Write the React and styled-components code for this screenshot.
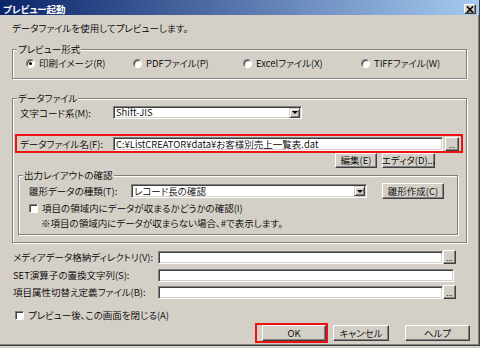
import React from "react";
import styled, { createGlobalStyle } from "styled-components";

const Global = createGlobalStyle`
  html, body { margin: 0; padding: 0; background: #d4d0c8; }
  * { box-sizing: border-box; }
`;

const FONT = `"Noto Sans CJK JP", "Noto Sans", sans-serif`;

const Window = styled.div`
  width: 480px;
  height: 346px;
  background: #d4d0c8;
  font-family: ${FONT};
  font-size: 9.5px;
  font-weight: 350;
  font-feature-settings: "palt";
  color: #000;
  display: flex;
  flex-direction: column;
  border-right: 1px solid #404040;
  border-bottom: 1px solid #404040;
  box-shadow: inset -1px -1px #808080;
  overflow: hidden;
`;

const TitleBar = styled.div`
  height: 15px;
  flex: none;
  display: flex;
  align-items: center;
  justify-content: space-between;
  padding: 2px 3px 0 3px;
  background: linear-gradient(to right, #0a246a, #a6caf0);
  color: #fff;
  font-weight: bold;
  font-size: 9.5px;
  line-height: 12px;
`;

const CloseBtn = styled.div`
  width: 12px;
  height: 10px;
  margin-top: 1px;
  background: #d4d0c8;
  border: 1px solid;
  border-color: #fff #404040 #404040 #fff;
  box-shadow: inset -1px -1px #808080;
  display: flex;
  align-items: center;
  justify-content: center;
`;

const Body = styled.div`
  display: flex;
  flex-direction: column;
  padding: 7px 12px 0 12px;
`;

const Text = styled.div`
  line-height: 12px;
  white-space: nowrap;
  padding-left: ${(p) => p.$pl || 0}px;
  margin-top: ${(p) => p.$mt || 0}px;
`;

const Group = styled.fieldset`
  margin: ${(p) => p.$mt || 0}px ${(p) => p.$mr || 0}px 0 ${(p) => p.$ml || 0}px;
  padding: 0 0 ${(p) => p.$pb || 0}px 0;
  min-inline-size: 0;
  border: 1px solid #808080;
  box-shadow: inset 1px 1px #fff, 1px 1px #fff;
  display: flex;
  flex-direction: column;
`;

const Legend = styled.legend`
  margin-left: 4px;
  padding: 0 1px;
  line-height: 12px;
  background: #d4d0c8;
  white-space: nowrap;
`;

const RadioRow = styled.div`
  display: grid;
  grid-template-columns: 107px 110px 118px auto;
  padding-left: 13px;
  margin-top: 1px;
  height: 12px;
  align-items: center;
`;

const RadioItem = styled.label`
  display: flex;
  align-items: center;
  gap: 4px;
  white-space: nowrap;
`;

const Radio = styled.span`
  width: 9px;
  height: 9px;
  border-radius: 50%;
  background: #fff;
  border: 1px solid;
  border-color: #808080 #fff #fff #808080;
  box-shadow: inset 1px 1px #404040;
  display: flex;
  align-items: center;
  justify-content: center;
  flex: none;
  &::after {
    content: "";
    width: 3px;
    height: 3px;
    border-radius: 50%;
    background: ${(p) => (p.$on ? "#000" : "transparent")};
  }
`;

const Check = styled.span`
  width: 9px;
  height: 9px;
  background: #fff;
  border: 1px solid;
  border-color: #808080 #fff #fff #808080;
  box-shadow: inset 1px 1px #404040;
  flex: none;
`;

const CheckRow = styled.div`
  display: flex;
  align-items: center;
  gap: 4px;
  height: 12px;
  padding-left: ${(p) => p.$pl || 0}px;
  margin-top: ${(p) => p.$mt || 0}px;
  white-space: nowrap;
`;

const FieldRow = styled.div`
  display: flex;
  align-items: center;
  height: ${(p) => p.$h || 14}px;
  padding-left: ${(p) => p.$pl || 0}px;
  margin-top: ${(p) => p.$mt || 0}px;
`;

const Label = styled.span`
  width: ${(p) => p.$w}px;
  flex: none;
  white-space: nowrap;
  line-height: 12px;
`;

const Field = styled.div`
  width: ${(p) => p.$w}px;
  height: ${(p) => p.$h || 14}px;
  flex: none;
  background: #fff;
  border: 1px solid;
  border-color: #808080 #fff #fff #808080;
  box-shadow: inset 1px 1px #404040, inset -1px -1px #d4d0c8;
  display: flex;
  align-items: center;
  justify-content: space-between;
  padding: 1px 2px 1px 2px;
  white-space: nowrap;
  overflow: hidden;
  line-height: 11px;
`;

const DropBtn = styled.span`
  width: 11px;
  height: 10px;
  flex: none;
  background: #d4d0c8;
  border: 1px solid;
  border-color: #d4d0c8 #404040 #404040 #d4d0c8;
  box-shadow: inset 1px 1px #fff, inset -1px -1px #808080;
  display: flex;
  align-items: center;
  justify-content: center;
  margin-right: -1px;
  &::after {
    content: "";
    border-left: 3px solid transparent;
    border-right: 3px solid transparent;
    border-top: 3px solid #000;
  }
`;

const Button = styled.div`
  width: ${(p) => p.$w}px;
  height: ${(p) => p.$h || 16}px;
  margin-left: ${(p) => p.$ml || 0}px;
  flex: none;
  background: #d4d0c8;
  border: 1px solid;
  border-color: #fff #404040 #404040 #fff;
  box-shadow: inset -1px -1px #808080;
  display: flex;
  align-items: center;
  justify-content: center;
  white-space: nowrap;
  line-height: 11px;
`;

const Browse = styled(Button)`
  align-items: flex-end;
  padding-bottom: 2px;
  font-size: 8px;
  line-height: 6px;
`;

const RedBox = styled.div`
  border: 2px solid #ee1111;
  display: flex;
  align-items: center;
  flex: none;
  margin: ${(p) => p.$m};
  padding: ${(p) => p.$p};
`;

const ButtonRow = styled.div`
  display: flex;
  align-items: center;
  gap: ${(p) => p.$gap || 0}px;
  padding-left: ${(p) => p.$pl || 0}px;
  margin-top: ${(p) => p.$mt || 0}px;
`;

const CloseGlyph = () => (
  <svg width="8" height="7" viewBox="0 0 8 7">
    <path d="M1 0.5 L7 6.5 M7 0.5 L1 6.5" stroke="#000" strokeWidth="1.6" />
  </svg>
);

export default function App() {
  return (
    <>
      <Global />
      <Window>
        <TitleBar>
          <span>プレビュー起動</span>
          <CloseBtn>
            <CloseGlyph />
          </CloseBtn>
        </TitleBar>
        <Body>
          <Text>データファイルを使用してプレビューします。</Text>

          <Group $mt={9} $pb={10}>
            <Legend>プレビュー形式</Legend>
            <RadioRow>
              <RadioItem>
                <Radio $on />
                印刷イメージ(R)
              </RadioItem>
              <RadioItem>
                <Radio />
                PDFファイル(P)
              </RadioItem>
              <RadioItem>
                <Radio />
                Excelファイル(X)
              </RadioItem>
              <RadioItem>
                <Radio />
                TIFFファイル(W)
              </RadioItem>
            </RadioRow>
          </Group>

          <Group $mt={13} $pb={7}>
            <Legend>データファイル</Legend>
            <FieldRow $pl={7} $mt={2} $h={13}>
              <Label $w={93}>文字コード系(M):</Label>
              <Field $w={189} $h={13}>
                <span>Shift-JIS</span>
                <DropBtn />
              </Field>
            </FieldRow>

            <RedBox $m="15px 3px 0 2px" $p="1px 0 0 3px">
              <Label $w={93}>データファイル名(F):</Label>
              <Field $w={330}>
                <span>C:¥ListCREATOR¥data¥お客様別売上一覧表.dat</span>
              </Field>
              <Browse $w={14} $h={14} $ml={2}>
                ...
              </Browse>
            </RedBox>

            <ButtonRow $mt={0} $pl={322} $gap={5}>
              <Button $w={42} $h={15}>編集(E)</Button>
              <Button $w={53} $h={15}>エディタ(D)...</Button>
            </ButtonRow>

            <Group $mt={1} $ml={5} $mr={8} $pb={5}>
              <Legend>出力レイアウトの確認</Legend>
              <FieldRow $pl={10} $mt={2} $h={16}>
                <Label $w={102}>雛形データの種類(T):</Label>
                <Field $w={236} $h={14}>
                  <span>レコード長の確認</span>
                  <DropBtn />
                </Field>
                <Button $w={62} $h={16} $ml={15}>
                  雛形作成(C)
                </Button>
              </FieldRow>
              <CheckRow $pl={10} $mt={3}>
                <Check />
                項目の領域内にデータが収まるかどうかの確認(I)
              </CheckRow>
              <Text $pl={22} $mt={3}>
                ※項目の領域内にデータが収まらない場合、#で表示します。
              </Text>
            </Group>
          </Group>

          <FieldRow $pl={1} $mt={7}>
            <Label $w={145}>メディアデータ格納ディレクトリ(V):</Label>
            <Field $w={285} $h={13} />
            <Browse $w={13} $h={14}>...</Browse>
          </FieldRow>
          <FieldRow $pl={1} $mt={4}>
            <Label $w={145}>SET演算子の置換文字列(S):</Label>
            <Field $w={296} $h={13} />
          </FieldRow>
          <FieldRow $pl={1} $mt={3}>
            <Label $w={145}>項目属性切替え定義ファイル(B):</Label>
            <Field $w={285} $h={13} />
            <Browse $w={13} $h={14}>...</Browse>
          </FieldRow>

          <CheckRow $pl={3} $mt={10}>
            <Check />
            プレビュー後、この画面を閉じる(A)
          </CheckRow>

          <ButtonRow $mt={2} $pl={243}>
            <RedBox $m="0" $p="0 0 0 5px">
              <Button $w={64} $h={16}>OK</Button>
            </RedBox>
            <Button $w={56} $h={16} $ml={5}>
              キャンセル
            </Button>
            <Button $w={65} $h={16} $ml={16}>
              ヘルプ
            </Button>
          </ButtonRow>
        </Body>
      </Window>
    </>
  );
}
